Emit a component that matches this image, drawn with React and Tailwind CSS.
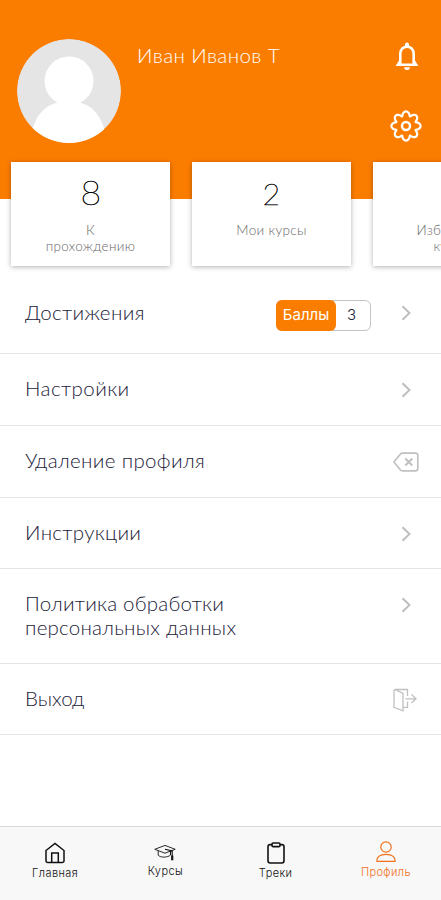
import React from "react";
import clsx from "clsx";

const stats = [
   { value: "8", size: "text-[34px] leading-9", lines: ["К", "прохождению"] },
   { value: "2", size: "text-[29px] leading-10", lines: ["Мои курсы"] },
   { value: "1", size: "text-[29px] leading-10", lines: ["Избранные", "курсы"] },
];

const gearPath = () => {
   const points = [];
   for (let i = 0; i < 160; i++) {
      const a = (i / 160) * Math.PI * 2;
      const r = 12.5 + 2.1 * Math.cos(8 * a);
      const t = a + 0.06 * Math.sin(8 * a);
      points.push(
         `${(16 + r * Math.sin(t)).toFixed(2)} ${(16 - r * Math.cos(t)).toFixed(2)}`
      );
   }
   return `M${points.join("L")}Z`;
};

const Bell = () => (
   <svg className="-mr-px h-8 w-8" viewBox="0 0 32 32" fill="none">
      <path
         d="M9.300 24V14.500C9.300 9.600 12 6.600 16 6.600s6.700 3 6.700 7.900V24"
         stroke="#fff"
         strokeWidth="2.600"
      />
      <path d="M16 2.500c1.300 0 2 .9 2 2V7h-4V4.500c0-1.100.7-2 2-2Z" fill="#fff" />
      <path d="M8 20.500 4.600 25.900H27.400L24 20.500v3H8Z" fill="#fff" />
      <path d="M13 27.200h6c-.3 1.900-1.500 2.900-3 2.900s-2.700-1-3-2.900Z" fill="#fff" />
   </svg>
);

const Gear = () => (
   <svg className="h-8 w-8" viewBox="0 0 32 32" fill="none" stroke="#fff">
      <path d={gearPath()} strokeWidth="2.200" strokeLinejoin="round" />
      <circle cx="16" cy="16" r="4" strokeWidth="2.500" />
   </svg>
);

const Chevron = () => (
   <svg className="mr-[30px] h-4 w-[10px]" viewBox="0 0 10 16" fill="none">
      <path d="m1.500 1.200 7 6.800-7 6.800" stroke="#bdbdbd" strokeWidth="1.900" />
   </svg>
);

const DeleteIcon = () => (
   <svg className="mr-[22px] h-5 w-[26px]" viewBox="0 0 26 20" fill="none" stroke="#c0c0c0">
      <path
         d="M9.300 1.200H22.500a2.300 2.300 0 0 1 2.300 2.300v13a2.300 2.300 0 0 1-2.300 2.300H9.300a2.500 2.500 0 0 1-1.800-.8L1.500 10.800a1.300 1.300 0 0 1 0-1.600L7.500 2a2.500 2.500 0 0 1 1.800-.8Z"
         strokeWidth="1.700"
      />
      <path d="m12.300 6.500 7 7m0-7-7 7" strokeWidth="2" />
   </svg>
);

const ExitIcon = () => (
   <svg className="mr-6 h-6 w-6" viewBox="0 0 24 24" fill="none" stroke="#c0c0c0" strokeWidth="1.300">
      <path d="M1 2.500 2 1.500 10 5.500V22.800L1 19.300ZM2 1.500H14.500V8M14.500 13.500V19.300H10" />
      <path d="M12.500 10.800H23M18.500 6.500 23 10.800 18.500 15" />
   </svg>
);

const HomeIcon = () => (
   <svg className="h-[22px] w-[22px]" viewBox="0 0 22 22" fill="none" stroke="currentColor" strokeWidth="1.500">
      <path d="M2 8.500 11 1.500l9 7V18.800a1.800 1.800 0 0 1-1.800 1.800H3.800A1.800 1.800 0 0 1 2 18.800Z" />
      <path d="M7.700 20.600V11h6.600v9.600" />
   </svg>
);

const CapIcon = () => (
   <svg className="h-[18px] w-[22px]" viewBox="0 0 22 18" fill="none" stroke="currentColor">
      <path d="M.8 5.300 11 1.400l10.200 3.900L11 9.200Z" strokeWidth=".9" />
      <path d="M4.200 7v4.200C6.800 14 13.200 13.500 16.500 11.200" strokeWidth=".9" />
      <path d="M11 5.300 18.200 6.900V12M16.500 7v4" strokeWidth="1.100" />
      <path d="M18.200 11.500v4.800" strokeWidth="2.200" />
   </svg>
);

const ClipboardIcon = () => (
   <svg className="h-[22px] w-[18px]" viewBox="0 0 18 22" fill="none" stroke="currentColor" strokeWidth="1.600">
      <rect x="1" y="2.600" width="16" height="18.400" rx="2.200" />
      <rect x="5" y="1" width="8" height="3.600" rx="1.200" fill="#f8f8f8" />
   </svg>
);

const UserIcon = () => (
   <svg className="h-[22px] w-5" viewBox="0 0 20 22" fill="none" stroke="currentColor" strokeWidth="1.200">
      <circle cx="10" cy="6" r="5.200" />
      <path d="M.8 20.300c0-4.200 3-7 9.200-7s9.200 2.800 9.200 7Z" strokeLinejoin="round" />
   </svg>
);

const rows = [
   { lines: ["Настройки"], tracking: ["tracking-[0.42px]"], icon: Chevron, height: "h-[72px]" },
   { lines: ["Удаление профиля"], tracking: ["tracking-[0.34px]"], icon: DeleteIcon, height: "h-[72px]" },
   { lines: ["Инструкции"], tracking: ["tracking-[0.32px]"], icon: Chevron, height: "h-[71px]" },
   {
      lines: ["Политика обработки", "персональных данных"],
      tracking: ["tracking-[0.22px]", "tracking-[0.24px]"],
      icon: Chevron,
      height: "h-[95px]",
   },
   { lines: ["Выход"], tracking: ["tracking-normal"], icon: ExitIcon, height: "h-[71px]" },
];

const tabs = [
   { label: "Главная", icon: HomeIcon, pad: "pt-[15px]" },
   { label: "Курсы", icon: CapIcon, pad: "pt-[17px]" },
   { label: "Треки", icon: ClipboardIcon, pad: "pt-[15px]" },
   { label: "Профиль", icon: UserIcon, pad: "pt-[14px]", active: true },
];

const App = () => {
   return (
      <div className="flex h-[900px] w-[441px] flex-col overflow-hidden bg-white font-['Lato',sans-serif] font-light">
         <header className="flex h-[199px] shrink-0 bg-[#fb7d00]">
            <svg className="mt-[39px] ml-[17px] h-[104px] w-[104px] rounded-full" viewBox="0 0 104 104">
               <circle cx="52" cy="52" r="52" fill="#e5e5e5" />
               <circle cx="52" cy="42" r="24.500" fill="#fff" />
               <path d="M15 92C20 73 31 65.500 41 63.500L39 62H65L63 63.500C75 67 83 75 88 92L76 104H28Z" fill="#fff" />
            </svg>
            <p className="mt-[43px] ml-[16px] text-[20.500px] leading-6 tracking-[0.4px] whitespace-nowrap text-white">
               Иван Иванов Т
            </p>
            <div className="mt-[40px] mr-[19px] ml-auto flex flex-col items-end gap-[38px]">
               <Bell />
               <Gear />
            </div>
         </header>

         <div className="-mt-[37px] flex shrink-0 gap-[22px] pl-[11px]">
            {stats.map((stat) => (
               <div
                  key={stat.lines[0]}
                  className="flex h-[104px] w-[159px] shrink-0 flex-col items-center bg-white pt-3 shadow-[0_1px_5px_rgba(0,0,0,0.3)]"
               >
                  <div className="h-10">
                     <p className={clsx("scale-x-105 font-thin text-black [-webkit-text-stroke:0.5px_black]", stat.size)}>
                        {stat.value}
                     </p>
                  </div>
                  <div className="mt-2 text-center text-[13.500px] leading-4 tracking-[0.33px] text-[#666]">
                     {stat.lines.map((line) => (
                        <p key={line}>{line}</p>
                     ))}
                  </div>
               </div>
            ))}
         </div>

         <main className="flex-1">
            <div className="flex h-[88px] items-start border-b border-[#e4e4e4] pt-[34px] pl-[25px]">
               <span className="text-[20.500px] leading-6 tracking-[0.36px] text-[#1b2138]">Достижения</span>
               <div className="mr-[30px] ml-auto flex h-[31px] w-[95px] rounded-md border border-[#c4c4c4] text-base">
                  <span className="-my-px -ml-px flex w-[60px] shrink-0 items-center justify-center rounded-md bg-[#fb7d00] font-['Inter',sans-serif] text-[15px] font-normal text-white">
                     Баллы
                  </span>
                  <span className="flex flex-1 items-center justify-center pr-[3px] font-['Inter',sans-serif] text-[15px] text-[#1b2138]">
                     3
                  </span>
               </div>
               <div className="mt-[5px]">
                  <Chevron />
               </div>
            </div>
            {rows.map(({ lines, tracking, icon: Icon, height }) => (
               <div
                  key={lines[0]}
                  className={clsx(
                     "flex items-start justify-between border-b border-[#e4e4e4] pt-[22px] pl-[25px]",
                     height
                  )}
               >
                  <div className="text-[20.500px] leading-6 whitespace-nowrap text-[#1b2138]">
                     {lines.map((line, i) => (
                        <p key={line} className={tracking[i]}>
                           {line}
                        </p>
                     ))}
                  </div>
                  <div className="mt-[2px] flex h-6 items-center">
                     <Icon />
                  </div>
               </div>
            ))}
         </main>

         <nav className="grid h-[74px] shrink-0 grid-cols-4 border-t border-[#d4d8d8] bg-[#f8f8f8] font-['Inter',sans-serif]">
            {tabs.map(({ label, icon: Icon, pad, active }) => (
               <div
                  key={label}
                  className={clsx(
                     "flex flex-col items-center",
                     pad,
                     active ? "text-[#f2711c]" : "text-[#111]"
                  )}
               >
                  <Icon />
                  <span className="mt-[2px] text-[11px] leading-[14px] tracking-[0.4px]">{label}</span>
               </div>
            ))}
         </nav>
      </div>
   );
};

export default App;
